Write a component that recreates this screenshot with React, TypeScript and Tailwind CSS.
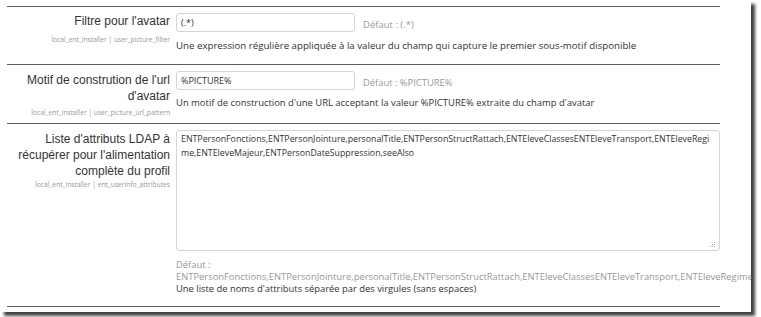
import React from "react";

const label = "font-['Liberation_Sans',Arial,sans-serif] text-[12px] leading-[16px] text-[#333]";
const small = "font-['Open_Sans',sans-serif] text-[6.7px] leading-[8px] text-[#999]";
const body = "font-['Open_Sans',sans-serif] leading-[12px]";

function Row({
  title,
  name,
  height,
  labelPad,
  nameGap,
  children,
}: {
  title: React.ReactNode;
  name: string;
  height: string;
  labelPad: string;
  nameGap: string;
  children: React.ReactNode;
}) {
  return (
    <div className={`flex border-t border-[#5f5f5f] ${height}`}>
      <div className={`w-[163px] shrink-0 text-right ${labelPad}`}>
        <div className={label}>{title}</div>
        <div className={`${small} ${nameGap} whitespace-nowrap`}>{name}</div>
      </div>
      <div className="ml-[6px] flex-1 pt-[6px]">{children}</div>
    </div>
  );
}

function Input({ value }: { value: string }) {
  return (
    <div className="flex h-[19px] w-[179px] items-center rounded-[3px] border border-[#d4d4d4] px-[4px] font-['Open_Sans',sans-serif] text-[9px] text-[#333]">
      {value}
    </div>
  );
}

export default function App() {
  return (
    <div className="h-[317px] w-[761px] bg-white">
      <div className="h-[312px] w-[751px] overflow-hidden bg-white pl-[7px] pt-[6px] shadow-[4px_4px_3px_rgba(0,0,0,0.75)]">
        <div className="w-[713px]">
          <Row
            title="Filtre pour l'avatar"
            name="local_ent_installer | user_picture_filter"
            height="h-[58px]"
            labelPad="pt-[6px]"
            nameGap="mt-[7px]"
          >
            <div className="flex">
              <Input value="(.*)" />
              <div className={`${body} ml-[8px] pt-[6px] text-[9.5px] text-[#999]`}>Défaut : (.*)</div>
            </div>
            <p className={`${body} mt-[8px] text-[9.7px] text-[#333]`}>
              Une expression régulière appliquée à la valeur du champ qui capture le premier sous-motif disponible
            </p>
          </Row>
          <Row
            title={
              <>
                Motif de constrution de l'url
                <br />
                d'avatar
              </>
            }
            name="local_ent_installer | user_picture_url_pattern"
            height="h-[59px]"
            labelPad="pt-[7px]"
            nameGap="mt-[5px]"
          >
            <div className="flex">
              <Input value="%PICTURE%" />
              <div className={`${body} ml-[8px] pt-[6px] text-[9.4px] text-[#999]`}>Défaut : %PICTURE%</div>
            </div>
            <p className={`${body} mt-[7px] text-[9.45px] text-[#333]`}>
              Un motif de construction d'une URL acceptant la valeur %PICTURE% extraite du champ d'avatar
            </p>
          </Row>
          <Row
            title={
              <>
                Liste d'attributs LDAP à
                <br />
                récupérer pour l'alimentation
                <br />
                complète du profil
              </>
            }
            name="local_ent_installer | ent_userinfo_attributes"
            height="h-[183px]"
            labelPad="pt-[7px]"
            nameGap="mt-[2px]"
          >
            <div className="relative h-[121px] w-[544px] rounded-[3px] border border-[#d4d4d4] px-[4px] pt-[1px] font-['Open_Sans',sans-serif] text-[8.8px] leading-[14px] text-[#333]">
              <div className="whitespace-nowrap">
                ENTPersonFonctions,ENTPersonJointure,personalTitle,ENTPersonStructRattach,ENTEleveClassesENTEleveTransport,ENTEleveRegi
              </div>
              <div className="whitespace-nowrap">me,ENTEleveMajeur,ENTPersonDateSuppression,seeAlso</div>
              <svg className="absolute bottom-[3px] right-[3px]" width="6" height="6" viewBox="0 0 6 6">
                <rect x="4" y="1" width="1" height="1" fill="#aaa" />
                <rect x="2" y="3" width="1" height="1" fill="#aaa" />
                <rect x="4" y="3" width="1" height="1" fill="#aaa" />
                <rect x="0" y="5" width="1" height="1" fill="#aaa" />
                <rect x="2" y="5" width="1" height="1" fill="#aaa" />
                <rect x="4" y="5" width="1" height="1" fill="#aaa" />
              </svg>
            </div>
            <div className={`${body} mt-[8px] text-[9.4px] text-[#999]`}>Défaut :</div>
            <div className={`${body} whitespace-nowrap text-[9.4px] text-[#999]`}>
              ENTPersonFonctions,ENTPersonJointure,personalTitle,ENTPersonStructRattach,ENTEleveClassesENTEleveTransport,ENTEleveRegime,ENTEleveMajeur,ENTPersonDateSuppression,seeAlso
            </div>
            <p className={`${body} text-[9.4px] text-[#333]`}>
              Une liste de noms d'attributs séparée par des virgules (sans espaces)
            </p>
          </Row>
          <div className="border-t border-[#5f5f5f]" />
        </div>
      </div>
    </div>
  );
}
